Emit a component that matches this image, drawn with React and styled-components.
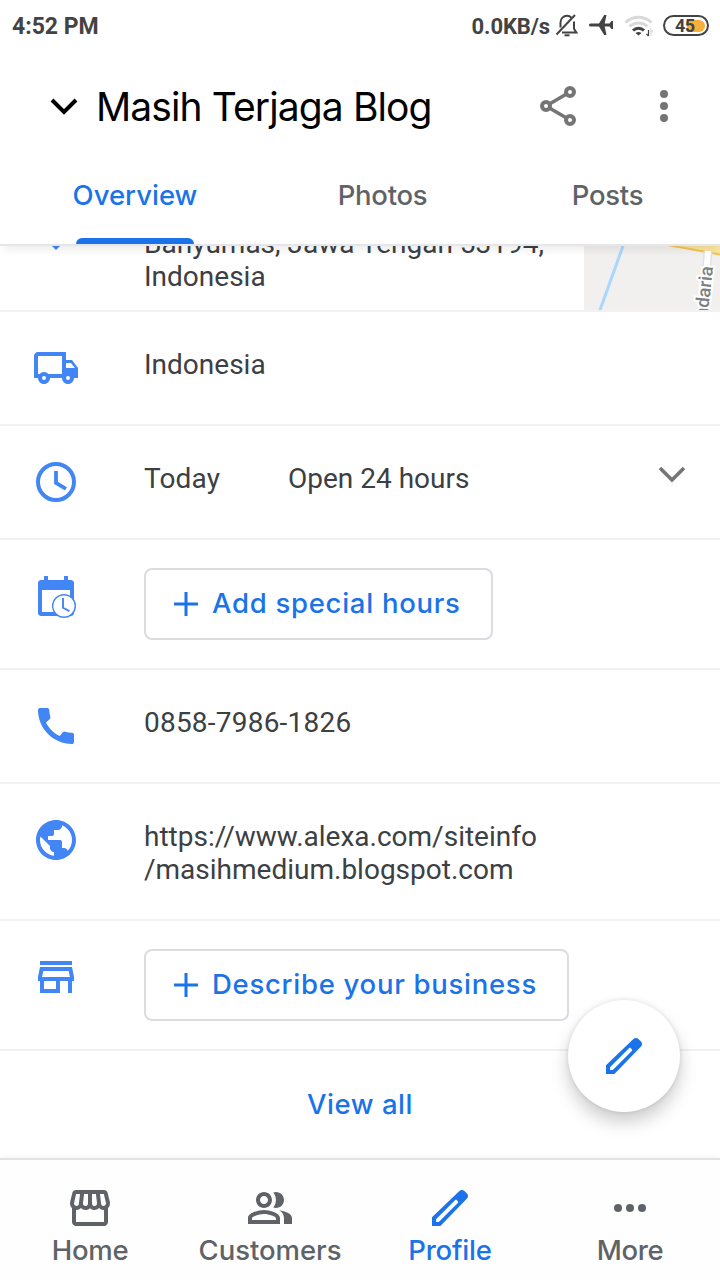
import styled, { createGlobalStyle } from "styled-components";
import {
  MdCall,
  MdOutlinePeopleAlt,
  MdOutlineStore,
  MdOutlineStorefront,
  MdPublic,
} from "react-icons/md";

const GlobalStyle = createGlobalStyle`
  body {
    margin: 0;
    background: #fff;
  }
  * {
    box-sizing: border-box;
  }
`;

const Screen = styled.div`
  width: 720px;
  height: 1280px;
  display: flex;
  flex-direction: column;
  overflow: hidden;
  position: relative;
  background: #fff;
  color: #3c4043;
  font-family: Roboto, sans-serif;
  white-space: nowrap;
`;

const Svg = styled.svg`
  display: block;
  flex: none;
`;

/* status bar */

const StatusBar = styled.div`
  height: 52px;
  flex: none;
  display: flex;
  align-items: center;
  justify-content: space-between;
  padding: 0 11px 0 12px;
  color: #434343;
  font-size: 23px;
  font-weight: 700;
`;

const Clock = styled.span`
  letter-spacing: 0;
`;

const Speed = styled.span`
  font-size: 22px;
  letter-spacing: -0.1px;
  margin-right: 5px;
`;

const StatusIcons = styled.div`
  display: flex;
  align-items: center;
`;

const StatusGlyph = styled.span`
  margin: -2px ${(p) => p.$gap}px 0 0;
`;

const Battery = styled.div`
  width: 46px;
  height: 21px;
  margin-top: -1px;
  padding: 2.5px;
  border: 2px solid #434343;
  border-radius: 11px;
  display: flex;
  justify-content: flex-end;
  position: relative;
`;

const Charge = styled.div`
  width: 18px;
  height: 12px;
  border-radius: 0 6px 6px 0;
  background: #f8ae3c;
`;

const Percent = styled.span`
  position: absolute;
  left: 10px;
  top: -1px;
  font-size: 18px;
  line-height: 19px;
  letter-spacing: -0.5px;
`;

/* header */

const Header = styled.header`
  height: 108px;
  flex: none;
  display: flex;
  align-items: center;
  padding: 0 32px 0 40px;
`;

const Title = styled.h1`
  margin: 1px auto 0 8px;
  font-family: Inter, sans-serif;
  font-size: 39px;
  font-weight: 400;
  line-height: 49px;
  letter-spacing: -0.9px;
  color: #000;
`;

const Kebab = styled.div`
  margin-left: 58px;
`;

const Tabs = styled.nav`
  height: 86px;
  flex: none;
  display: grid;
  grid-template-columns: 270px 225px 225px;
  border-bottom: 2px solid #e5e5ea;
  position: relative;
  z-index: 1;
  box-shadow: 0 8px 8px -4px rgba(0, 0, 0, 0.07);
  background: #fff;
`;

const Tab = styled.a`
  display: flex;
  flex-direction: column;
  align-items: center;
  font-family: Inter, sans-serif;
  font-size: 27.5px;
  font-weight: 500;
  line-height: 34px;
  padding-top: 18px;
  letter-spacing: ${(p) => p.$spacing || "-0.3px"};
  color: ${(p) => (p.$active ? "#1a73e8" : "#5f6368")};
`;

const Indicator = styled.span`
  width: 118px;
  height: 6px;
  margin-top: auto;
  border-radius: 6px 6px 0 0;
  background: #1a73e8;
`;

/* profile list */

const Content = styled.main`
  height: 912px;
  flex: none;
  overflow: hidden;
`;

const Row = styled.section`
  height: ${(p) => p.$height || 114}px;
  display: flex;
  align-items: flex-start;
  padding-left: 32px;
  border-bottom: 2px solid #f1f1f2;
`;

const IconBox = styled.div`
  width: 112px;
  padding-top: 32px;
  flex: none;
  color: #4285f4;
`;

const Text = styled.div`
  width: ${(p) => (p.$width ? p.$width + "px" : "auto")};
  padding-top: 36px;
  font-size: 28px;
  line-height: 33px;
  letter-spacing: ${(p) => p.$spacing || "0"};
`;

const AddressRow = styled(Row)`
  align-items: flex-end;
`;

const Pin = styled(IconBox)`
  align-self: flex-start;
  padding-top: 0;
`;

const Address = styled(Text)`
  padding: 0 0 17px;
  width: 440px;
`;

const OutlineButton = styled.button`
  width: ${(p) => p.$width}px;
  height: 72px;
  margin-top: 28px;
  padding: 0 0 0 28px;
  display: flex;
  align-items: center;
  gap: 14px;
  border: 2px solid #dadce0;
  border-radius: 8px;
  background: #fff;
  color: #1a73e8;
  font-family: Inter, sans-serif;
  font-size: 27.5px;
  font-weight: 500;
  letter-spacing: 0.72px;
`;

const ButtonLabel = styled.span`
  margin-top: -2px;
`;

const Toggle = styled.div`
  margin: 32px 24px 0 auto;
`;

const ViewAll = styled.a`
  height: 105px;
  display: flex;
  align-items: center;
  justify-content: center;
  font-family: Inter, sans-serif;
  font-size: 27.5px;
  font-weight: 500;
  letter-spacing: 0.55px;
  color: #1a73e8;
`;

const Fab = styled.button`
  position: absolute;
  left: 568px;
  top: 1000px;
  width: 112px;
  height: 112px;
  padding: 0;
  display: flex;
  align-items: center;
  justify-content: center;
  border: 0;
  border-radius: 50%;
  background: #fff;
  color: #1a73e8;
  box-shadow: 0 10px 18px rgba(0, 0, 0, 0.2), 0 0 4px rgba(0, 0, 0, 0.12);
`;

/* bottom navigation */

const BottomNav = styled.nav`
  height: 122px;
  flex: none;
  display: grid;
  grid-template-columns: repeat(4, 180px);
  border-top: 2px solid #e3e3e4;
  box-shadow: 0 -1px 4px rgba(0, 0, 0, 0.05);
  background: #fefefe;
`;

const NavItem = styled.a`
  display: flex;
  flex-direction: column;
  align-items: center;
  padding-top: 24px;
  color: ${(p) => (p.$active ? "#1a73e8" : "#5f6368")};
`;

const NavLabel = styled.span`
  font-family: Inter, sans-serif;
  font-size: 27.5px;
  font-weight: 500;
  line-height: 34px;
  margin-top: 1px;
  letter-spacing: ${(p) => p.$spacing};
`;

const BellOffIcon = () => (
  <Svg width="24" height="24" viewBox="0 0 24 24" fill="none" stroke="#434343" strokeWidth="2">
    <path d="M5.500 14.500V9.500C5.500 5.500 8.500 2.800 12 2.800c1.800 0 3.300.7 4.400 1.900M19 8.500v7.300l2.400 3.700H7" />
    <path d="M1.500 21.500 20 2" />
    <path d="M9.500 22.300h5" />
  </Svg>
);

const PlaneIcon = () => (
  <Svg width="26" height="22" viewBox="0 0 26 22" fill="#434343">
    <path d="M1 11c0-1 .8-1.500 2-1.500h8L16.200 1h2.300l-1.800 8.500h4.800L23.500 7H25v8h-1.500l-2-2.500h-4.800L18.500 21h-2.300L11 12.500H3C1.800 12.500 1 12 1 11z" />
  </Svg>
);

const WifiIcon = () => (
  <Svg width="30" height="24" viewBox="0 0 30 24" fill="none" strokeWidth="3">
    <path d="M1.500 9.500a18.500 18.500 0 0 1 26 0" stroke="#d9d9d9" />
    <path d="M5.500 13.500a13 13 0 0 1 18 0" stroke="#d9d9d9" />
    <path d="M9 17.500a8 8 0 0 1 11 0" stroke="#434343" />
    <path d="m14.500 22.500-3-2.500q3-2.200 6 0z" fill="#434343" />
    <path d="M24.500 17v6M22.500 21l2 2" stroke="#434343" strokeWidth="1.200" />
    <path d="M27 23v-6l2 2" stroke="#d9d9d9" strokeWidth="1.200" />
  </Svg>
);

const ChevronIcon = ({ color, y, width = 4 }) => (
  <Svg width="48" height="48" viewBox="0 0 48 48" fill="none" stroke={color} strokeWidth={width}>
    <path d={`m12 ${y} 12 12 12-12`} />
  </Svg>
);

const ShareIcon = () => (
  <Svg width="48" height="48" viewBox="0 0 48 48" fill="#fff" stroke="#757575" strokeWidth="4">
    <path d="M36 10 12 24l24 14" fill="none" strokeWidth="3.500" />
    <circle cx="36" cy="10" r="4" />
    <circle cx="12" cy="24" r="4" />
    <circle cx="36" cy="38" r="4" />
  </Svg>
);

const MenuIcon = () => (
  <Svg width="48" height="48" viewBox="0 0 48 48" fill="#757575">
    <circle cx="24" cy="12" r="4" />
    <circle cx="24" cy="24" r="4" />
    <circle cx="24" cy="36" r="4" />
  </Svg>
);

const MoreIcon = () => (
  <Svg width="48" height="48" viewBox="0 0 48 48" fill="currentColor">
    <circle cx="12" cy="24" r="4" />
    <circle cx="24" cy="24" r="4" />
    <circle cx="36" cy="24" r="4" />
  </Svg>
);

const TruckIcon = () => (
  <Svg width="48" height="48" viewBox="0 0 24 24" fill="currentColor" fillRule="evenodd">
    <path d="M17 8V4H3c-1.100 0-2 .9-2 2v11h2c0 1.660 1.340 3 3 3s3-1.340 3-3h6c0 1.660 1.340 3 3 3s3-1.340 3-3h2v-5l-3-4h-3zM3 6v9h.780c.550-.610 1.340-1 2.220-1s1.670.390 2.220 1H15V6H3zM17 9.500V12h4.460L19.500 9.500H17zM6 16a1 1 0 1 0 0 2 1 1 0 0 0 0-2zM18 16a1 1 0 1 0 0 2 1 1 0 0 0 0-2z" />
  </Svg>
);

const ClockIcon = () => (
  <Svg width="48" height="48" viewBox="0 0 24 24" fill="none" stroke="currentColor" strokeWidth="2">
    <circle cx="12" cy="12" r="9" />
    <path d="M12 6.500v6l5 2.900" strokeWidth="1.900" />
  </Svg>
);

const CalendarIcon = () => (
  <Svg width="48" height="48" viewBox="0 0 24 24" fill="currentColor">
    <path
      fillRule="evenodd"
      d="M6 2h2v2h8V2h2v2h1.500c.8 0 1.500.7 1.500 1.500v15c0 .8-.7 1.500-1.500 1.500h-15C3.700 22 3 21.300 3 20.500v-15C3 4.700 3.700 4 4.500 4H6zM5 9v11h14V9z"
    />
    <circle cx="16" cy="17" r="5.650" fill="#fff" stroke="currentColor" strokeWidth=".7" />
    <path d="M15.500 13v4.900l3.200 1.700" fill="none" stroke="currentColor" strokeWidth=".95" />
  </Svg>
);

const PencilIcon = () => (
  <Svg width="48" height="48" viewBox="0 0 24 24" fill="currentColor" fillRule="evenodd">
    <path d="M3 21v-4.400L16.700 3.500c.7-.7 1.800-.7 2.500 0l1.300 1.300c.7.7.7 1.800 0 2.500L7.200 21zM5 17.600V19h1.400L15.900 9.500c.3-.3.300-.6 0-.9l-.5-.5c-.3-.3-.6-.3-.9 0z" />
  </Svg>
);

const PlusIcon = () => (
  <Svg width="24" height="24" viewBox="0 0 24 24" stroke="currentColor" strokeWidth="3">
    <path d="M12 0v24M0 12h24" />
  </Svg>
);

const Map = () => (
  <Svg width="136" height="64" viewBox="0 0 136 64">
    <rect width="136" height="64" fill="#f1f0ef" />
    <path d="M39 0 16 64" stroke="#a8d8ff" strokeWidth="3" />
    <path d="M84 0h52v9z" fill="#f9e49c" />
    <path d="m84-1 52 9.500" stroke="#f2c44f" strokeWidth="2" />
    <path d="m124 5-2 26" stroke="#e2e2e2" strokeWidth="9" />
    <path d="m124 5-2 26" stroke="#fff" strokeWidth="6" />
    <text
      transform="translate(123.500 72.500) rotate(-84)"
      fontSize="18.500"
      fontWeight="500"
      fill="#7b8083"
      stroke="#fff"
      strokeWidth="4"
      paintOrder="stroke"
    >
      ndaria
    </text>
  </Svg>
);

const navItems = [
  { label: "Home", icon: <MdOutlineStorefront size={48} />, spacing: "-0.3px" },
  { label: "Customers", icon: <MdOutlinePeopleAlt size={48} />, spacing: "-0.05px" },
  { label: "Profile", icon: <PencilIcon />, spacing: "-0.2px", active: true },
  { label: "More", icon: <MoreIcon />, spacing: "-0.4px" },
];

const App = () => {
  return (
    <Screen>
      <GlobalStyle />
      <StatusBar>
        <Clock>4:52 PM</Clock>
        <StatusIcons>
          <Speed>0.0KB/s</Speed>
          <StatusGlyph $gap={9}>
            <BellOffIcon />
          </StatusGlyph>
          <StatusGlyph $gap={10}>
            <PlaneIcon />
          </StatusGlyph>
          <StatusGlyph $gap={9}>
            <WifiIcon />
          </StatusGlyph>
          <Battery>
            <Charge />
            <Percent>45</Percent>
          </Battery>
        </StatusIcons>
      </StatusBar>
      <Header>
        <ChevronIcon color="#000" y={18} />
        <Title>Masih Terjaga Blog</Title>
        <ShareIcon />
        <Kebab>
          <MenuIcon />
        </Kebab>
      </Header>
      <Tabs>
        <Tab $active $spacing="0">
          Overview
          <Indicator />
        </Tab>
        <Tab>Photos</Tab>
        <Tab>Posts</Tab>
      </Tabs>
      <Content>
        <AddressRow $height={66}>
          <Pin>
            <Svg width="48" height="4" viewBox="0 0 48 4" fill="currentColor">
              <path d="M20 0h8l-4 4z" />
            </Svg>
          </Pin>
          <Address>
            Banyumas, Jawa Tengah 53194,
            <br />
            Indonesia
          </Address>
          <Map />
        </AddressRow>
        <Row>
          <IconBox>
            <TruckIcon />
          </IconBox>
          <Text>Indonesia</Text>
        </Row>
        <Row>
          <IconBox>
            <ClockIcon />
          </IconBox>
          <Text $width={144} $spacing="0.15px">
            Today
          </Text>
          <Text>Open 24 hours</Text>
          <Toggle>
            <ChevronIcon color="#757575" y={10} width={3.6} />
          </Toggle>
        </Row>
        <Row $height={130}>
          <IconBox>
            <CalendarIcon />
          </IconBox>
          <OutlineButton $width={349}>
            <PlusIcon />
            <ButtonLabel>Add special hours</ButtonLabel>
          </OutlineButton>
        </Row>
        <Row>
          <IconBox>
            <MdCall size={48} />
          </IconBox>
          <Text $spacing="0.22px">0858-7986-1826</Text>
        </Row>
        <Row $height={137}>
          <IconBox>
            <MdPublic size={48} />
          </IconBox>
          <Text>
            https://www.alexa.com/siteinfo
            <br />
            /masihmedium.blogspot.com
          </Text>
        </Row>
        <Row $height={130}>
          <IconBox>
            <MdOutlineStore size={48} />
          </IconBox>
          <OutlineButton $width={425}>
            <PlusIcon />
            <ButtonLabel>Describe your business</ButtonLabel>
          </OutlineButton>
        </Row>
        <ViewAll>View all</ViewAll>
      </Content>
      <BottomNav>
        {navItems.map((item) => (
          <NavItem key={item.label} $active={item.active}>
            {item.icon}
            <NavLabel $spacing={item.spacing}>{item.label}</NavLabel>
          </NavItem>
        ))}
      </BottomNav>
      <Fab>
        <PencilIcon />
      </Fab>
    </Screen>
  );
};

export default App;
